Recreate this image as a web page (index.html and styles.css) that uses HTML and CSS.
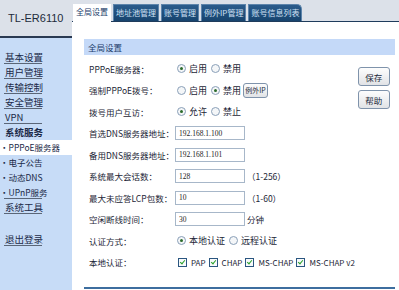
FILE: index.html
```html
<!DOCTYPE html>
<html lang="zh-CN">
<head>
  <meta charset="UTF-8">
  <title>PPPoE服务器</title>
  <link rel="stylesheet" href="styles.css">
</head>
<body>
  <div class="page">
    <aside class="side">
      <div class="brand">TL-ER6110</div>
      <ul class="menu">
        <li class="item line">基本设置</li>
        <li class="item line">用户管理</li>
        <li class="item line">传输控制</li>
        <li class="item line">安全管理</li>
        <li class="item line">VPN</li>
        <li class="item strong">系统服务</li>
        <li class="item sub active">・PPPoE服务器</li>
        <li class="item sub">・电子公告</li>
        <li class="item sub">・动态DNS</li>
        <li class="item sub line">・UPnP服务</li>
        <li class="item line">系统工具</li>
        <li class="item gap line">退出登录</li>
      </ul>
    </aside>

    <main class="main">
      <div class="tabs">
        <span class="tab current">全局设置</span>
        <span class="tab">地址池管理</span>
        <span class="tab">账号管理</span>
        <span class="tab">例外IP管理</span>
        <span class="tab last">账号信息列表</span>
      </div>

      <div class="panel">
        <div class="panel-head">全局设置</div>
        <div class="panel-body">
          <div class="form">
            <div class="row">
              <span class="label">PPPoE服务器：</span>
              <span class="radio on"></span><span class="opt">启用</span>
              <span class="radio"></span><span class="opt">禁用</span>
            </div>
            <div class="row">
              <span class="label">强制PPPoE拨号：</span>
              <span class="radio"></span><span class="opt">启用</span>
              <span class="radio on"></span><span class="opt">禁用</span>
              <button class="btn small" type="button">例外IP</button>
            </div>
            <div class="row">
              <span class="label">拨号用户互访：</span>
              <span class="radio on"></span><span class="opt">允许</span>
              <span class="radio"></span><span class="opt">禁止</span>
            </div>
            <div class="row">
              <span class="label">首选DNS服务器地址：</span>
              <input class="field" type="text" value="192.168.1.100">
            </div>
            <div class="row">
              <span class="label">备用DNS服务器地址：</span>
              <input class="field" type="text" value="192.168.1.101">
            </div>
            <div class="row">
              <span class="label">系统最大会话数：</span>
              <input class="field" type="text" value="128">
              <span class="hint">（1-256）</span>
            </div>
            <div class="row">
              <span class="label">最大未应答LCP包数：</span>
              <input class="field" type="text" value="10">
              <span class="hint">（1-60）</span>
            </div>
            <div class="row">
              <span class="label">空闲断线时间：</span>
              <input class="field" type="text" value="30">
              <span class="hint">分钟</span>
            </div>
            <div class="row">
              <span class="label">认证方式：</span>
              <span class="radio on"></span><span class="opt">本地认证</span>
              <span class="radio"></span><span class="opt">远程认证</span>
            </div>
            <div class="row">
              <span class="label">本地认证：</span>
              <span class="check first"></span><span class="opt small">PAP</span>
              <span class="check"></span><span class="opt small">CHAP</span>
              <span class="check"></span><span class="opt small">MS-CHAP</span>
              <span class="check"></span><span class="opt small">MS-CHAP v2</span>
            </div>
          </div>
          <div class="actions">
            <button class="btn" type="button">保存</button>
            <button class="btn" type="button">帮助</button>
          </div>
        </div>
        <div class="panel-foot"></div>
      </div>
    </main>
  </div>
</body>
</html>
```

FILE: styles.css
```css
html, body {
  margin: 0;
  padding: 0;
  background: #ffffff;
}
body {
  font-family: "Noto Sans CJK SC", "Liberation Sans", sans-serif;
  font-size: 9px;
  color: #1c2636;
}
.page {
  display: flex;
  width: 399px;
  height: 290px;
  overflow: hidden;
}

/* left menu */
.side {
  width: 72px;
  flex: none;
  display: flex;
  flex-direction: column;
  background: #c7dcf7;
}
.brand {
  height: 36px;
  line-height: 36px;
  padding-left: 8px;
  font-family: "Liberation Sans", sans-serif;
  font-size: 11px;
  color: #1e2b3b;
  background: #dce1e9;
  border-bottom: 2px solid #2a3a52;
}
.menu {
  list-style: none;
  margin: 0;
  padding: 12px 0 0 0;
}
.item {
  height: 15px;
  line-height: 14px;
  padding-left: 5px;
  font-size: 9.5px;
  color: #1b2a48;
  white-space: nowrap;
}
.item.line {
  background: linear-gradient(#5a6678, #5a6678) no-repeat 4px 13px / 38px 1px;
}
.item.strong {
  font-weight: bold;
}
.item.sub {
  padding-left: 0;
  font-size: 8.5px;
}
.item.active {
  background: #ffffff;
}
.item.gap {
  margin-top: 17px;
}

/* tabs and panel */
.main {
  flex: 1;
  display: flex;
  flex-direction: column;
}
.tabs {
  height: 21px;
  display: flex;
  align-items: flex-end;
  gap: 2px;
  padding-left: 1px;
  background: #dce1e9;
  border-bottom: 1px solid #1f3c5c;
}
.tab {
  height: 17px;
  line-height: 16px;
  padding: 0 2px;
  font-size: 8px;
  white-space: nowrap;
  color: #cfe0f4;
  background: linear-gradient(#2b5c8c, #17446e);
  border: 1px solid #5d84ab;
  border-bottom: none;
  box-sizing: border-box;
}
.tab.current {
  height: 18px;
  margin-bottom: -1px;
  padding: 0 3px;
  color: #1b3c6a;
  background: #ffffff;
  border: none;
}
.tab.last {
  border-top-right-radius: 5px;
}
.panel {
  margin: 17px 6px 0 12px;
  display: flex;
  flex-direction: column;
}
.panel-head {
  height: 16px;
  line-height: 16px;
  padding-left: 4px;
  font-size: 8.5px;
  color: #1b3c6a;
  background: #c4d9f8;
}
.panel-body {
  display: flex;
  padding-top: 3px;
}
.form {
  flex: 1;
  padding-left: 5px;
}
.row {
  height: 21.5px;
  display: flex;
  align-items: center;
  white-space: nowrap;
}
.label {
  width: 86px;
  flex: none;
  font-size: 8.5px;
}
.radio {
  width: 9px;
  height: 9px;
  flex: none;
  margin: 0 3px 0 2px;
  border: 1px solid #8aa0b8;
  border-radius: 50%;
  box-sizing: border-box;
  background: #f4f6f8;
  display: flex;
  align-items: center;
  justify-content: center;
}
.radio.on::after {
  content: "";
  width: 3px;
  height: 3px;
  border-radius: 50%;
  background: #2b6b2b;
}
.opt {
  margin-right: 2px;
}
.opt.small {
  margin-right: 3px;
  font-size: 8px;
}
.check {
  width: 9px;
  height: 9px;
  flex: none;
  margin-right: 4px;
  border: 1px solid #2a5680;
  box-sizing: border-box;
  background: #f7f9fb;
  position: relative;
}
.check.first {
  margin-left: 3px;
}
.check::after {
  content: "";
  position: absolute;
  left: 2px;
  top: 0;
  width: 2px;
  height: 4px;
  border: solid #2aa12a;
  border-width: 0 1.5px 1.5px 0;
  transform: rotate(40deg);
}
.field {
  width: 70px;
  height: 14px;
  flex: none;
  margin: 0;
  padding: 0 3px;
  border: 1px solid #a7b7c9;
  box-sizing: border-box;
  font-family: "Liberation Serif", serif;
  font-size: 7.5px;
  color: #222222;
}
.hint {
  margin-left: 2px;
  font-size: 8.5px;
}
.btn {
  width: 32px;
  height: 19px;
  padding: 0;
  margin-bottom: 4px;
  font-family: "Noto Sans CJK SC", sans-serif;
  font-size: 8.5px;
  color: #1c2a3c;
  background: linear-gradient(#fdfdfd, #e1e3e6);
  border: 1px solid #7f93ab;
  border-radius: 3px;
}
.btn.small {
  width: 25px;
  height: 15px;
  margin: 0;
  font-size: 7px;
}
.actions {
  width: 32px;
  flex: none;
  margin-right: 5px;
  padding-top: 9px;
  display: flex;
  flex-direction: column;
}
.panel-foot {
  margin-top: 14px;
  height: 2px;
  background: #3d6e9f;
}
```
